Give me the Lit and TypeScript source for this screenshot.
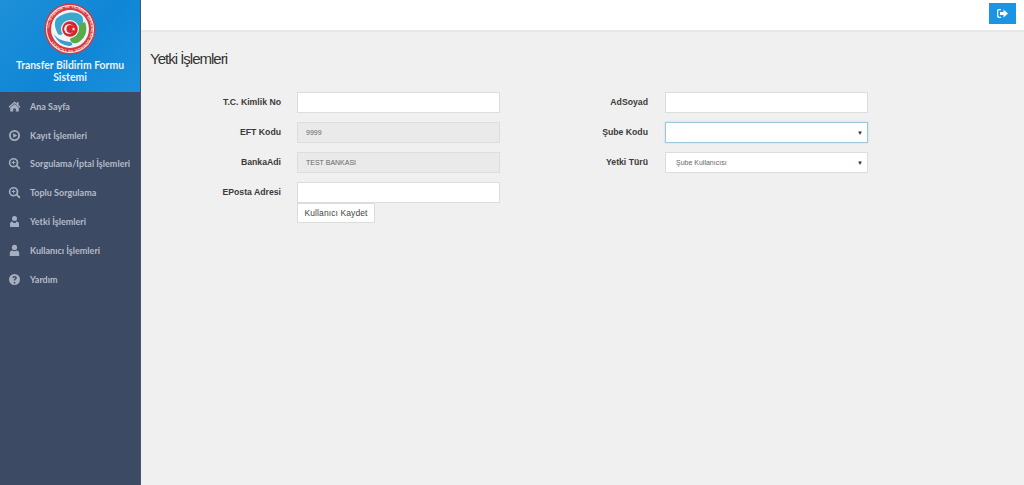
import { LitElement, html, css, svg } from 'lit';
import { customElement } from 'lit/decorators.js';

const icons: Record<string, unknown> = {
  home: svg`<path d="M6.500 1.500 0.500 6.800l.8.9 5.200-4.500 5.200 4.500.8-.9-2-1.800V2H9v1.600z"/><path d="M2.200 7.600 6.500 4l4.300 3.600V11.500H7.800V8.500H5.200v3H2.200z"/>`,
  play: svg`<path fill-rule="evenodd" d="M6.500 1a5.500 5.500 0 1 0 0 11 5.500 5.500 0 0 0 0-11zm0 1.800a3.700 3.700 0 1 1 0 7.400 3.700 3.700 0 0 1 0-7.400z"/><path d="M5.200 4.300 9.200 6.500 5.200 8.700z"/>`,
  search: svg`<path fill-rule="evenodd" d="M5.500 1a4.700 4.700 0 1 0 2.800 8.500l2.900 2.900 1.300-1.300-2.900-2.900A4.700 4.700 0 0 0 5.500 1zm0 1.600a3.100 3.100 0 1 1 0 6.200 3.100 3.100 0 0 1 0-6.200z"/><path d="M5 3.700h1v1.300h1.300v1H6v1.300H5V6H3.700V5H5z"/>`,
  userTie: svg`<circle cx="6.500" cy="3.400" r="2.500"/><path d="M2 12V8.800C2 7.500 3 6.600 4.300 6.400L5.600 8h1.800l1.300-1.600c1.300.2 2.300 1.100 2.300 2.400V12z"/>`,
  user: svg`<circle cx="6.500" cy="3.400" r="2.600"/><path d="M1.800 12V9.200C1.800 7.600 2.900 6.500 4.300 6.500c.6.500 1.300.8 2.200.8s1.600-.3 2.200-.8c1.400 0 2.500 1.100 2.500 2.700V12z"/>`,
  help: svg`<path fill-rule="evenodd" d="M6.500 1a5.500 5.500 0 1 0 0 11 5.500 5.500 0 0 0 0-11zM5.800 9.100h1.500v1.400H5.800zM4.300 4.800C4.500 3.500 5.400 2.900 6.600 2.900c1.300 0 2.200.8 2.200 1.900 0 1-.6 1.400-1.100 1.800-.3.200-.4.400-.4.900H5.800c0-.9.200-1.300.8-1.800.4-.3.700-.5.700-.8 0-.4-.3-.7-.8-.7s-.8.300-.9.800z"/>`,
};

const menu = [
  ['home', 'Ana Sayfa'],
  ['play', 'Kayıt İşlemleri'],
  ['search', 'Sorgulama/İptal İşlemleri'],
  ['search', 'Toplu Sorgulama'],
  ['userTie', 'Yetki İşlemleri'],
  ['user', 'Kullanıcı İşlemleri'],
  ['help', 'Yardım'],
];

@customElement('app-root')
export class AppRoot extends LitElement {
  static styles = css`
    :host {
      display: flex;
      height: 485px;
      overflow: hidden;
      font-family: 'Liberation Sans', Arial, sans-serif;
      background: #f0f0f0;
    }
    .sidebar {
      width: 141px;
      flex: none;
      background: #3c4a63;
      border-right: 1px solid #47546c;
      box-sizing: border-box;
    }
    .brand {
      height: 92px;
      background: linear-gradient(135deg, #1f90d8 0%, #0f86d6 55%, #1b8fdb 100%);
      display: flex;
      flex-direction: column;
      align-items: center;
      padding-top: 3px;
      box-sizing: border-box;
    }
    .brand svg { display: block; }
    .brand-title {
      margin-top: 4px;
      width: 130px;
      text-align: center;
      color: #e8f3fb;
      font: 700 10.400px/12px Lato, sans-serif;
    }
    .menu { padding: 0; margin: 0; list-style: none; }
    .menu li {
      height: 28.800px;
      display: flex;
      align-items: center;
      gap: 10px;
      padding-left: 8px;
      color: #b4bcca;
      font: 700 9px Lato, sans-serif;
      white-space: nowrap;
    }
    .menu svg { width: 13px; height: 13px; fill: #a6afbf; flex: none; margin-right: -1px; }
    .content { flex: 1; min-width: 0; display: flex; flex-direction: column; }
    .topbar {
      height: 32px;
      flex: none;
      box-sizing: border-box;
      background: #fff;
      border-bottom: 2px solid #e8e8e8;
      display: flex;
      justify-content: flex-end;
      padding: 3px 8px 0 0;
    }
    .logout {
      width: 27px;
      height: 21px;
      background: #1a95e6;
      border: none;
      padding: 0;
      display: flex;
      align-items: center;
      justify-content: center;
    }
    .logout svg { width: 11px; height: 9px; fill: #fff; }
    h1 {
      margin: 17px 0 0 9px;
      font-weight: 400;
      font-size: 15px;
      line-height: 20px;
      letter-spacing: -1px;
      color: #333;
    }
    .form {
      margin: 23px 0 0 0;
      display: grid;
      grid-template-columns: 140px 203px 133px 203px;
      column-gap: 16px;
      row-gap: 9px;
      align-items: center;
      grid-template-rows: 21px 21px 21px 21px;
    }
    .form label {
      text-align: right;
      font-size: 8.700px;
      font-weight: 700;
      color: #3a3a3a;
      white-space: nowrap;
      padding-bottom: 2px;
    }
    .form label.second { padding-right: 1px; }
    .field {
      height: 21px;
      box-sizing: border-box;
      background: #fff;
      border: 1px solid #ddd;
      padding: 0 8px;
      display: flex;
      align-items: center;
      justify-content: space-between;
      font-size: 7px;
      color: #666;
    }
    .field.select { padding-left: 10px; }
    .field.readonly { background: #eaeaea; }
    .field.focus { border-color: #9fc6dd; box-shadow: 0 0 2px #bcd9ea; }
    .arrow { font-size: 6px; color: #333; margin-right: -4px; }
    .actions { grid-column: 2; margin-top: -9px; }
    button.save {
      display: block;
      width: 78px;
      height: 20px;
      padding: 0;
      background: #fff;
      border: 1px solid #ddd;
      font: 8.500px 'Liberation Sans', Arial, sans-serif;
      letter-spacing: 0.100px;
      color: #444;
    }
  `;

  // tiny logo, the ring text is real text on a circle path
  logo() {
    return html`<svg width="52" height="52" viewBox="0 0 52 52">
      <defs><path id="ring" d="M26 26m-21 0a21 21 0 1 1 42 0a21 21 0 1 1-42 0"></path></defs>
      <circle cx="26" cy="26" r="25.500" fill="#d9363c"></circle>
      <circle cx="26" cy="26" r="24" fill="#f3eced"></circle>
      <circle cx="26" cy="26" r="23" fill="#d63a40"></circle>
      <circle cx="26" cy="26" r="19" fill="#f2f5f6"></circle>
      <text font-size="4" font-weight="700" fill="#f6dcdc" font-family="Liberation Sans"><textPath href="#ring">T.C. GÜMRÜK VE TİCARET BAKANLIĞI GÜMRÜK VE TİCARET</textPath></text>
      <path d="M12 16c7-7 20-9 26-3 3 6 0 11-6 10-6-2-10 1-12 6-2 4-6 4-7 0-2-4-3-9-1-13z" fill="#3aa8cc"></path>
      <path d="M41 19c3 8 1 15-6 20-5 3-9 0-9-3 4-2 6-5 7-9 1-4 4-7 8-8z" fill="#58ab48"></path>
      <path d="M10 31c3 5 8 7 16 8 4 1 2 4 0 4-7 0-14-5-16-12z" fill="#3a9ccf"></path>
      <circle cx="26" cy="26" r="9" fill="#f7f7f7"></circle>
      <circle cx="26" cy="26" r="7.800" fill="#d8262e"></circle>
      <circle cx="25" cy="26" r="4.800" fill="#fff"></circle>
      <circle cx="26.300" cy="26" r="3.900" fill="#d8262e"></circle>
      <path d="M29.500 24.200l.5 1.300 1.400 0-1.100.9.400 1.300-1.200-.8-1.100.8.400-1.300-1.100-.9 1.400 0z" fill="#fff"></path>
    </svg>`;
  }

  field(value: string, cls = '', arrow = false) {
    return html`<div class="field ${cls} ${arrow ? 'select' : ''}"><span>${value}</span>${arrow ? html`<span class="arrow">▼</span>` : ''}</div>`;
  }

  render() {
    return html`
      <aside class="sidebar">
        <div class="brand">
          ${this.logo()}
          <div class="brand-title">Transfer Bildirim Formu Sistemi</div>
        </div>
        <ul class="menu">
          ${menu.map(([icon, label]) => html`
            <li><svg viewBox="0 0 13 13">${icons[icon]}</svg>${label}</li>`)}
        </ul>
      </aside>
      <div class="content">
        <div class="topbar">
          <button class="logout" aria-label="Çıkış">
            <svg viewBox="0 0 11 9"><path d="M4 0H2C.8 0 0 .9 0 2v5c0 1.100.8 2 2 2h2V7.700H2.200C1.700 7.700 1.300 7.300 1.300 6.800V2.200c0-.5.4-.9.900-.9H4z"/><path d="M6.500.5 11 4.500 6.500 8.500V6H3V3h3.500z"/></svg>
          </button>
        </div>
        <h1>Yetki İşlemleri</h1>
        <div class="form">
          <label>T.C. Kimlik No</label>${this.field('')}
          <label class="second">AdSoyad</label>${this.field('')}
          <label>EFT Kodu</label>${this.field('9999', 'readonly')}
          <label class="second">Şube Kodu</label>${this.field('', 'focus', true)}
          <label>BankaAdi</label>${this.field('TEST BANKASI', 'readonly')}
          <label class="second">Yetki Türü</label>${this.field('Şube Kullanıcısı', '', true)}
          <label>EPosta Adresi</label>${this.field('')}
          <div></div><div></div>
          <div></div>
          <div class="actions"><button class="save">Kullanıcı Kaydet</button></div>
        </div>
      </div>
    `;
  }
}
